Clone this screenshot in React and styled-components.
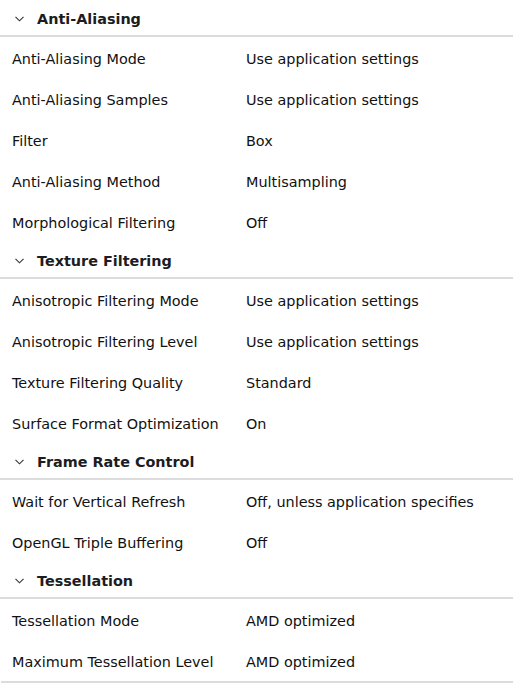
import React from 'react'
import styled, { createGlobalStyle } from 'styled-components'

const GlobalStyle = createGlobalStyle`
  html, body {
    margin: 0;
    padding: 0;
    background: #ffffff;
  }
  body {
    font-family: 'DejaVu Sans', Verdana, sans-serif;
    font-size: 14.4px;
    color: #111111;
  }
  * {
    box-sizing: border-box;
  }
`

const Panel = styled.div`
  width: 512px;
  border-bottom: 2px solid #dcdcdc;
  margin-left: 1px;
`

const SectionHeader = styled.div`
  height: 37px;
  display: flex;
  align-items: center;
  padding-top: 2px;
  border-bottom: 2px solid #dcdcdc;
  margin-left: -1px;
  padding-left: 15px;
`

const Chevron = styled.svg`
  width: 9px;
  height: 6px;
  margin-right: 13px;
  flex-shrink: 0;
`

const SectionTitle = styled.span`
  font-weight: 700;
  color: #1c1c22;
`

const Row = styled.div`
  height: 41px;
  display: grid;
  grid-template-columns: 234px 1fr;
  align-items: center;
  padding-top: 2px;
  padding-left: 11px;
`

const Label = styled.span`
  white-space: nowrap;
`

const Value = styled.span`
  white-space: nowrap;
`

const sections = [
  {
    title: 'Anti-Aliasing',
    rows: [
      ['Anti-Aliasing Mode', 'Use application settings'],
      ['Anti-Aliasing Samples', 'Use application settings'],
      ['Filter', 'Box'],
      ['Anti-Aliasing Method', 'Multisampling'],
      ['Morphological Filtering', 'Off'],
    ],
  },
  {
    title: 'Texture Filtering',
    rows: [
      ['Anisotropic Filtering Mode', 'Use application settings'],
      ['Anisotropic Filtering Level', 'Use application settings'],
      ['Texture Filtering Quality', 'Standard'],
      ['Surface Format Optimization', 'On'],
    ],
  },
  {
    title: 'Frame Rate Control',
    rows: [
      ['Wait for Vertical Refresh', 'Off, unless application specifies'],
      ['OpenGL Triple Buffering', 'Off'],
    ],
  },
  {
    title: 'Tessellation',
    rows: [
      ['Tessellation Mode', 'AMD optimized'],
      ['Maximum Tessellation Level', 'AMD optimized'],
    ],
  },
]

function Section({ title, rows }) {
  return (
    <>
      <SectionHeader>
        <Chevron viewBox="0 0 9 6">
          <path d="M0.5 0.8 L4.5 4.8 L8.5 0.8" fill="none" stroke="#333" strokeWidth="1.1" />
        </Chevron>
        <SectionTitle>{title}</SectionTitle>
      </SectionHeader>
      {rows.map(([label, value]) => (
        <Row key={label}>
          <Label>{label}</Label>
          <Value>{value}</Value>
        </Row>
      ))}
    </>
  )
}

export default function App() {
  return (
    <>
      <GlobalStyle />
      <Panel>
        {sections.map(s => (
          <Section key={s.title} title={s.title} rows={s.rows} />
        ))}
      </Panel>
    </>
  )
}
